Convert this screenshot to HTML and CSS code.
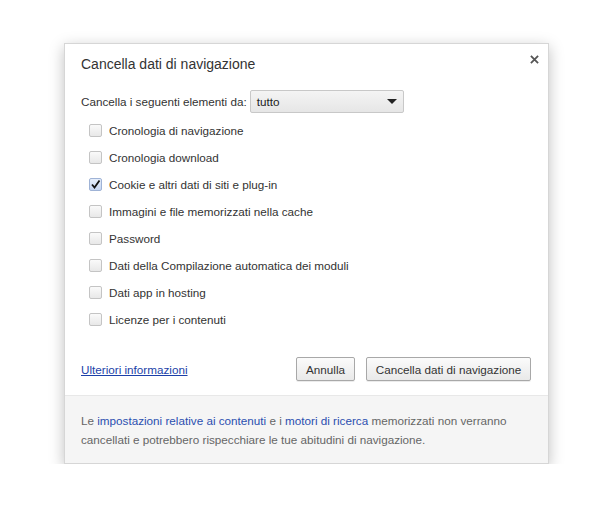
FILE: index.html
```html
<!DOCTYPE html>
<html>
<head>
<meta charset="utf-8">
<link rel="stylesheet" href="styles.css">
</head>
<body>
<div class="page">
  <div class="dialog">
    <div class="main">
      <div class="close">
        <svg width="9" height="9" viewBox="0 0 10 10"><path d="M1 1 L9 9 M9 1 L1 9" stroke="#555" stroke-width="2" fill="none"/></svg>
      </div>
      <div class="title">Cancella dati di navigazione</div>
      <div class="period">
        <span>Cancella i seguenti elementi da:</span>
        <div class="select"><span>tutto</span><span class="arrow"></span></div>
      </div>
      <ul class="items">
        <li><span class="cb"></span>Cronologia di navigazione</li>
        <li><span class="cb"></span>Cronologia download</li>
        <li><span class="cb checked"><svg width="11" height="11" viewBox="0 0 11 11"><path d="M2 5.5 L4.5 8.5 L9.5 1.5" stroke="#111" stroke-width="1.8" fill="none"/></svg></span>Cookie e altri dati di siti e plug-in</li>
        <li><span class="cb"></span>Immagini e file memorizzati nella cache</li>
        <li><span class="cb"></span>Password</li>
        <li><span class="cb"></span>Dati della Compilazione automatica dei moduli</li>
        <li><span class="cb"></span>Dati app in hosting</li>
        <li><span class="cb"></span>Licenze per i contenuti</li>
      </ul>
      <div class="actions">
        <a class="more" href="#">Ulteriori informazioni</a>
        <div class="buttons">
          <button class="btn cancel">Annulla</button>
          <button class="btn clear">Cancella dati di navigazione</button>
        </div>
      </div>
    </div>
    <div class="footer">
      <div class="line"><span>Le </span><a href="#">impostazioni relative ai contenuti</a><span> e i </span><a href="#">motori di ricerca</a><span> memorizzati non verranno</span></div>
      <div class="line"><span>cancellati e potrebbero rispecchiare le tue abitudini di navigazione.</span></div>
    </div>
  </div>
</div>
</body>
</html>
```
FILE: styles.css
```css
html, body {
  margin: 0;
  padding: 0;
  background: #fff;
}
body {
  font-family: "Liberation Sans", Arial, sans-serif;
  font-size: 11.7px;
  color: #333;
}
.page {
  padding: 43px 0 0 64px;
}
.dialog {
  width: 485px;
  height: 421px;
  background: #fff;
  border: 1px solid #d6d6d6;
  box-shadow: 0 4px 14px rgba(0,0,0,0.25);
  display: flex;
  flex-direction: column;
  box-sizing: border-box;
}
.main {
  position: relative;
  flex: 1;
  padding: 0 17px 0 16px;
}
.close {
  position: absolute;
  top: 9px;
  right: 9px;
}
.title {
  font-size: 14px;
  color: #333;
  margin-top: 11px;
  line-height: 18px;
}
.period {
  display: flex;
  align-items: center;
  margin-top: 17px;
  height: 22px;
}
.select {
  margin-left: 3px;
  width: 154px;
  height: 23px;
  box-sizing: border-box;
  border: 1px solid #c8c8c8;
  border-radius: 2px;
  background: linear-gradient(#f4f4f4, #e6e6e6);
  display: flex;
  align-items: center;
  justify-content: space-between;
  padding: 0 6px 0 6px;
  color: #222;
}
.arrow {
  width: 0;
  height: 0;
  border-left: 5px solid transparent;
  border-right: 5px solid transparent;
  border-top: 5px solid #222;
}
.items {
  list-style: none;
  margin: 5px 0 0 0;
  padding: 0 0 0 8px;
}
.items li {
  display: flex;
  align-items: center;
  height: 27px;
  color: #333;
}
.cb {
  width: 11px;
  height: 11px;
  border: 1px solid #c4c4c4;
  border-radius: 2px;
  background: linear-gradient(#fafafa, #e8e8e8);
  margin-right: 7px;
  display: flex;
  align-items: center;
  justify-content: center;
}
.cb.checked {
  background: linear-gradient(#e6eefb, #c6d6f2);
  border-color: #9fb3d6;
}
.actions {
  display: flex;
  align-items: center;
  justify-content: space-between;
  margin-top: 24px;
}
.more {
  color: #1b3fa8;
  text-decoration: underline;
}
.buttons {
  display: flex;
  gap: 11px;
}
.btn {
  font-family: "Liberation Sans", Arial, sans-serif;
  font-size: 11.7px;
  color: #333;
  height: 24px;
  padding: 0;
  white-space: nowrap;
  border: 1px solid #a8a8a8;
  border-radius: 2px;
  background: linear-gradient(#fbfbfb, #e9e9e9);
  box-shadow: 0 1px 0 rgba(0,0,0,0.08);
}
.btn.cancel {
  width: 59px;
}
.btn.clear {
  width: 165px;
}
.footer {
  background: #f5f5f5;
  border-top: 1px solid #e8e8e8;
  padding: 15px 16px 14px 16px;
  height: 68px;
  box-sizing: border-box;
  color: #666;
}
.line {
  line-height: 19px;
  white-space: nowrap;
}
.line a {
  color: #2b4fb0;
  text-decoration: none;
}
```
